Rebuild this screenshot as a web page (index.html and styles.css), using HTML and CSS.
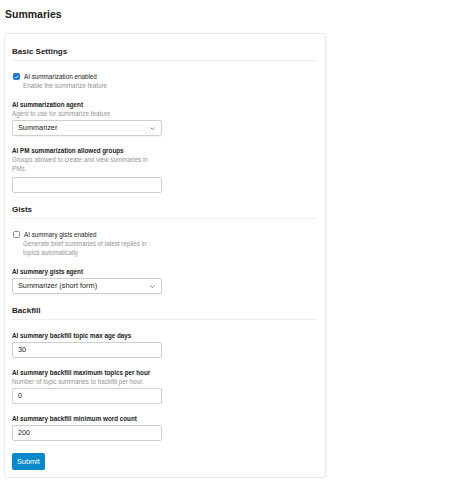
FILE: index.html
```html
<!DOCTYPE html>
<html>
<head>
<meta charset="utf-8">
<link rel="stylesheet" href="styles.css">
</head>
<body>
<h1 class="page-title">Summaries</h1>
<form class="card">
  <section class="section">
    <h2 class="section-title">Basic Settings</h2>
    <div class="setting">
      <label class="check-row">
        <span class="box checked"><svg viewBox="0 0 10 10" width="6" height="6"><path d="M2 5.2 L4.2 7.2 L8 2.8" fill="none" stroke="#fff" stroke-width="1.8"/></svg></span>
        <span class="check-label">AI summarization enabled</span>
      </label>
      <div class="desc indent">Enable the summarize feature</div>
    </div>
    <div class="setting">
      <div class="label">AI summarization agent</div>
      <div class="desc">Agent to use for summarize feature</div>
      <div class="field select"><span>Summarizer</span><svg class="chev" viewBox="0 0 10 6" width="5" height="3"><path d="M1 1 L5 5 L9 1" fill="none" stroke="#666" stroke-width="1.6"/></svg></div>
    </div>
    <div class="setting">
      <div class="label">AI PM summarization allowed groups</div>
      <div class="desc narrow">Groups allowed to create and view summaries in PMs.</div>
      <div class="field input tall-gap"></div>
    </div>
  </section>
  <section class="section">
    <h2 class="section-title">Gists</h2>
    <div class="setting">
      <label class="check-row">
        <span class="box"></span>
        <span class="check-label">AI summary gists enabled</span>
      </label>
      <div class="desc indent narrow">Generate brief summaries of latest replies in topics automatically</div>
    </div>
    <div class="setting">
      <div class="label">AI summary gists agent</div>
      <div class="field select"><span>Summarizer (short form)</span><svg class="chev" viewBox="0 0 10 6" width="5" height="3"><path d="M1 1 L5 5 L9 1" fill="none" stroke="#666" stroke-width="1.6"/></svg></div>
    </div>
  </section>
  <section class="section">
    <h2 class="section-title">Backfill</h2>
    <div class="setting">
      <div class="label">AI summary backfill topic max age days</div>
      <div class="field input">30</div>
    </div>
    <div class="setting">
      <div class="label">AI summary backfill maximum topics per hour</div>
      <div class="desc">Number of topic summaries to backfill per hour.</div>
      <div class="field input">0</div>
    </div>
    <div class="setting">
      <div class="label">AI summary backfill minimum word count</div>
      <div class="field input">200</div>
    </div>
  </section>
  <button type="button" class="submit">Submit</button>
</form>
</body>
</html>
```

FILE: styles.css
```css
html, body {
  margin: 0;
  background: #fff;
}
body {
  padding: 7px 4px;
  font-family: "Liberation Sans", Arial, sans-serif;
  color: #222;
}
.page-title {
  margin: 0 0 12px 1px;
  font-size: 10.5px;
  line-height: 14px;
  font-weight: bold;
}
.card {
  width: 305px;
  border: 1px solid #e9e9e9;
  border-radius: 3px;
  box-shadow: 0 0 2px rgba(0, 0, 0, 0.05);
  padding: 12px 8px 7px 7px;
}
.section {
  margin-bottom: 11px;
}
.section-title {
  margin: 0 0 11px;
  font-size: 8px;
  line-height: 11px;
  font-weight: bold;
  padding-bottom: 3px;
  border-bottom: 1px solid #ededed;
}
.setting {
  margin-bottom: 10px;
}
.setting:last-child {
  margin-bottom: 0;
}
.check-row {
  display: flex;
  align-items: center;
  gap: 4px;
  font-size: 6.3px;
  line-height: 9px;
}
.box {
  width: 5px;
  height: 5px;
  border: 1px solid #8a8a8a;
  border-radius: 1.5px;
  background: #fff;
  display: flex;
  align-items: center;
  justify-content: center;
  margin-left: 1px;
}
.box.checked {
  border-color: #1f74d4;
  background: #1f74d4;
}
.label {
  font-size: 6.3px;
  line-height: 9px;
  font-weight: bold;
}
.desc {
  font-size: 6.3px;
  line-height: 9px;
  color: #949494;
}
.indent {
  padding-left: 11px;
}
.narrow {
  box-sizing: border-box;
  width: 150px;
}
.field {
  box-sizing: border-box;
  width: 150px;
  height: 16px;
  margin-top: 2px;
  border: 1px solid #cfcfcf;
  border-radius: 2px;
  background: #fff;
  font-size: 7.3px;
  line-height: 14px;
  padding: 0 5px;
  color: #222;
}
.tall-gap {
  margin-top: 4px;
}
.select {
  display: flex;
  align-items: center;
  justify-content: space-between;
  box-shadow: 0 1px 1px rgba(0,0,0,0.04);
}
.chev {
  margin-right: 1px;
}
.submit {
  display: block;
  margin-top: 12px;
  height: 17px;
  padding: 0 5px;
  border: 0;
  border-radius: 2px;
  background: #0a88cc;
  color: #fff;
  font-family: "Liberation Sans", Arial, sans-serif;
  font-size: 7.3px;
  line-height: 17px;
}
```
